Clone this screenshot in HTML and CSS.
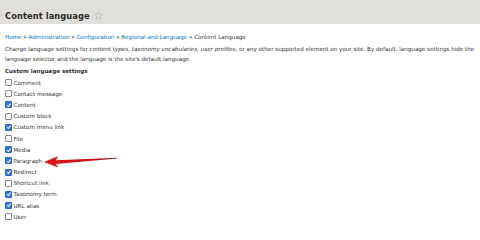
FILE: index.html
```html
<!DOCTYPE html>
<html lang="en">
<head>
<meta charset="utf-8">
<title>Content language</title>
<link rel="stylesheet" href="styles.css">
</head>
<body>
<header class="page-header">
  <h1 class="page-title">Content language</h1>
  <svg class="star" viewBox="0 0 10 10" width="9" height="9" aria-hidden="true">
    <polygon points="5,0.6 6.2,3.6 9.4,3.8 6.9,5.9 7.8,9.2 5,7.4 2.2,9.2 3.1,5.9 0.6,3.8 3.8,3.6" fill="none" stroke="#b8b7b2" stroke-width="0.7" stroke-linejoin="round"/>
  </svg>
</header>
<main class="content">
  <nav class="breadcrumb">
    <a href="#">Home</a> » <a href="#">Administration</a> » <a href="#">Configuration</a> » <a href="#">Regional and Language</a> » Content Language
  </nav>
  <p class="description">Change language settings for <em>content types, taxonomy vocabularies, user profiles</em>, or any other supported element on your site. By default, language settings hide the language selector and the language is the site's default language.</p>
  <h2 class="section-title">Custom language settings</h2>
  <ul class="options">
    <li class="option"><span class="box"></span>Comment</li>
    <li class="option"><span class="box"></span>Contact message</li>
    <li class="option"><span class="box checked"></span>Content</li>
    <li class="option"><span class="box"></span>Custom block</li>
    <li class="option"><span class="box checked"></span>Custom menu link</li>
    <li class="option"><span class="box"></span>File</li>
    <li class="option"><span class="box checked"></span>Media</li>
    <li class="option"><span class="box checked"></span>Paragraph</li>
    <li class="option"><span class="box checked"></span>Redirect</li>
    <li class="option"><span class="box"></span>Shortcut link</li>
    <li class="option"><span class="box checked"></span>Taxonomy term</li>
    <li class="option"><span class="box checked"></span>URL alias</li>
    <li class="option"><span class="box"></span>User</li>
  </ul>
</main>
<svg class="arrow" viewBox="0 0 480 228" width="480" height="228" aria-hidden="true">
  <defs>
    <linearGradient id="ag" x1="0" x2="1" y1="0" y2="0">
      <stop offset="0" stop-color="#e0141c"/>
      <stop offset="0.7" stop-color="#c8121a"/>
      <stop offset="1" stop-color="#7a1014"/>
    </linearGradient>
  </defs>
  <polygon points="44,162 58,156.3 56,160.2 117,157.7 117,158.6 56,164 58,167.6" fill="url(#ag)"/>
</svg>
</body>
</html>
```
FILE: styles.css
```css
html, body {
  margin: 0;
  padding: 0;
  background: #ffffff;
}
body {
  width: 480px;
  height: 228px;
  overflow: hidden;
  position: relative;
  font-family: "DejaVu Sans", Verdana, sans-serif;
  color: #333333;
}
.page-header {
  height: 24px;
  box-sizing: border-box;
  background: #e0dfdb;
  display: flex;
  align-items: center;
  padding: 6px 5px 0;
  gap: 4px;
}
.page-title {
  margin: 0;
  font-family: "DejaVu Sans Condensed", "DejaVu Sans", sans-serif;
  font-size: 9.2px;
  font-weight: bold;
  color: #2a2a2a;
  letter-spacing: 0.1px;
}
.star {
  display: block;
}
.content {
  padding: 9px 2px 0 5px;
}
.breadcrumb {
  font-size: 5.6px;
  line-height: 8px;
  color: #333333;
}
.breadcrumb a {
  color: #0074bd;
  text-decoration: none;
}
.description {
  margin: 3px 0 0;
  font-size: 5.6px;
  line-height: 10px;
}
.section-title {
  margin: 3px 0 0;
  font-size: 5.6px;
  line-height: 8px;
  font-weight: bold;
}
.options {
  list-style: none;
  margin: 2px 0 0;
  padding: 0;
  display: flex;
  flex-direction: column;
}
.option {
  height: 11.2px;
  display: flex;
  align-items: center;
  font-size: 5.6px;
  gap: 1.5px;
}
.box {
  width: 5px;
  height: 5px;
  border: 0.6px solid #8a8a8a;
  border-radius: 1px;
  background: #ffffff;
  position: relative;
  flex: none;
}
.box.checked {
  background: #3478e0;
  border-color: #2c66c4;
}
.box.checked::after {
  content: "";
  position: absolute;
  left: 1.5px;
  top: 0.3px;
  width: 1.4px;
  height: 2.8px;
  border: solid #ffffff;
  border-width: 0 0.8px 0.8px 0;
  transform: rotate(40deg);
}
.arrow {
  position: absolute;
  left: 0;
  top: 0;
  pointer-events: none;
}
```
